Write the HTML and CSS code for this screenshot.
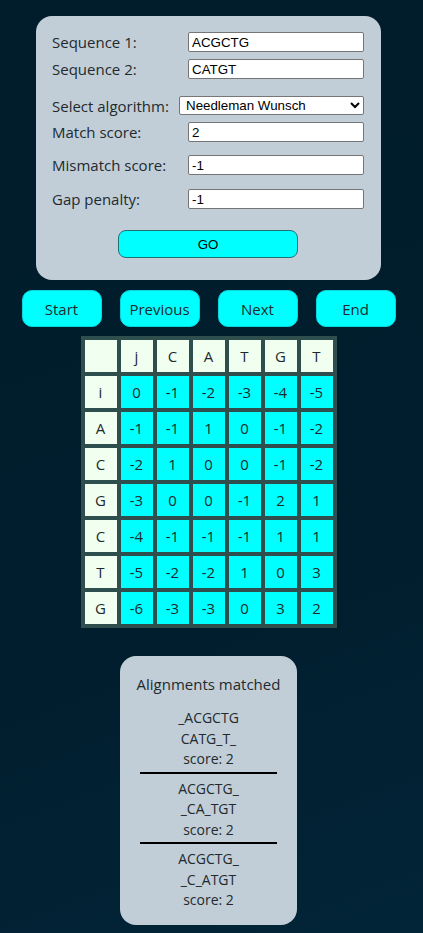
FILE: index.html
```html
<!DOCTYPE html>
<html>
<head>
<meta charset="utf-8">
<link rel="stylesheet" href="styles.css">
</head>
<body>
<div class="page">
  <form class="card form-card">
    <div class="row r1"><label>Sequence 1:</label><input class="field" type="text" value="ACGCTG"></div>
    <div class="row r2"><label>Sequence 2:</label><input class="field" type="text" value="CATGT"></div>
    <div class="row r3"><label>Select algorithm:</label><select class="algo"><option>Needleman Wunsch</option></select></div>
    <div class="row r4"><label>Match score:</label><input class="field" type="text" value="2"></div>
    <div class="row r5"><label>Mismatch score:</label><input class="field" type="text" value="-1"></div>
    <div class="row r6"><label>Gap penalty:</label><input class="field" type="text" value="-1"></div>
    <div class="go-wrap"><button type="button" class="go">GO</button></div>
  </form>

  <div class="nav">
    <button class="nav-btn">Start</button>
    <button class="nav-btn">Previous</button>
    <button class="nav-btn">Next</button>
    <button class="nav-btn">End</button>
  </div>

  <table class="matrix">
    <tr><td class="h"></td><td class="h">j</td><td class="h">C</td><td class="h">A</td><td class="h">T</td><td class="h">G</td><td class="h">T</td></tr>
    <tr><td class="h">i</td><td>0</td><td>-1</td><td>-2</td><td>-3</td><td>-4</td><td>-5</td></tr>
    <tr><td class="h">A</td><td>-1</td><td>-1</td><td>1</td><td>0</td><td>-1</td><td>-2</td></tr>
    <tr><td class="h">C</td><td>-2</td><td>1</td><td>0</td><td>0</td><td>-1</td><td>-2</td></tr>
    <tr><td class="h">G</td><td>-3</td><td>0</td><td>0</td><td>-1</td><td>2</td><td>1</td></tr>
    <tr><td class="h">C</td><td>-4</td><td>-1</td><td>-1</td><td>-1</td><td>1</td><td>1</td></tr>
    <tr><td class="h">T</td><td>-5</td><td>-2</td><td>-2</td><td>1</td><td>0</td><td>3</td></tr>
    <tr><td class="h">G</td><td>-6</td><td>-3</td><td>-3</td><td>0</td><td>3</td><td>2</td></tr>
  </table>

  <div class="card result-card">
    <div class="title">Alignments matched</div>
    <div class="alignment">
      <div>_ACGCTG</div><div>CATG_T_</div><div>score: 2</div>
    </div>
    <hr class="sep">
    <div class="alignment">
      <div>ACGCTG_</div><div>_CA_TGT</div><div>score: 2</div>
    </div>
    <hr class="sep">
    <div class="alignment">
      <div>ACGCTG_</div><div>_C_ATGT</div><div>score: 2</div>
    </div>
  </div>
</div>
</body>
</html>
```

FILE: styles.css
```css
html, body {
  margin: 0;
  padding: 0;
}
body {
  min-height: 933px;
  background: linear-gradient(160deg, #011d2c 0%, #011e2e 65%, #022538 100%);
  font-family: "Open Sans", "Noto Sans", sans-serif;
  color: #1e2a2e;
}
.page {
  width: 417px;
  display: flex;
  flex-direction: column;
  align-items: center;
  padding-top: 16px;
  padding-bottom: 9px;
}
.card {
  background: #c1ced8;
  border-radius: 16px;
  box-sizing: border-box;
}
.form-card {
  width: 345px;
  padding: 16px 17px 22px 16px;
  display: flex;
  flex-direction: column;
  margin: 0;
}
.row {
  display: flex;
  align-items: center;
  justify-content: space-between;
  height: 20px;
}
.row label {
  font-size: 15px;
  color: #1f2a2e;
}
.r2 { margin-top: 7px; }
.r3 { margin-top: 17px; height: 19px; }
.r4 { margin-top: 7px; }
.r5 { margin-top: 13px; }
.r6 { margin-top: 14px; }
.field {
  width: 176px;
  height: 20px;
  box-sizing: border-box;
  border: 1px solid #767676;
  border-radius: 2px;
  padding: 0 3px;
  font-family: "Liberation Sans", Arial, sans-serif;
  font-size: 13.33px;
  color: #000;
  background: #fff;
}
.algo {
  width: 185px;
  height: 19px;
  box-sizing: border-box;
  border: 1px solid #767676;
  border-radius: 2px;
  font-family: "Liberation Sans", Arial, sans-serif;
  font-size: 13.33px;
  color: #000;
  background: #fff;
  padding: 0 0 0 2px;
}
.go-wrap {
  display: flex;
  justify-content: center;
  margin-top: 21px;
}
.go {
  width: 180px;
  height: 28px;
  background: #00ffff;
  border: 1px solid #1f6f73;
  border-radius: 8px;
  font-family: "Liberation Sans", Arial, sans-serif;
  font-size: 13.33px;
  color: #000;
  padding: 0;
}
.nav {
  display: flex;
  gap: 18px;
  margin-top: 10px;
}
.nav-btn {
  width: 80px;
  height: 37px;
  background: #00ffff;
  border: 1px solid #09d6dc;
  border-radius: 10px;
  font-family: "Open Sans", "Noto Sans", sans-serif;
  font-size: 15px;
  color: #1e2a2e;
  padding: 0;
}
.matrix {
  margin-top: 9px;
  background: #2f4f4f;
  border-spacing: 4px;
  border-collapse: separate;
}
.matrix td {
  width: 32px;
  height: 32px;
  padding: 0;
  text-align: center;
  vertical-align: middle;
  background: #00ffff;
  font-size: 15px;
  color: #1e2a2e;
}
.matrix td.h {
  background: #f0fff0;
}
.result-card {
  margin-top: 28px;
  width: 177px;
  padding: 18px 20px 14px 20px;
  text-align: center;
  font-size: 14px;
  line-height: 20.5px;
}
.title {
  font-size: 15px;
  line-height: 20px;
  margin: 0 -16px 14px;
  white-space: nowrap;
}
.sep {
  border: none;
  height: 2px;
  background: #000;
  margin: 2px 0 5px 0;
}
```
